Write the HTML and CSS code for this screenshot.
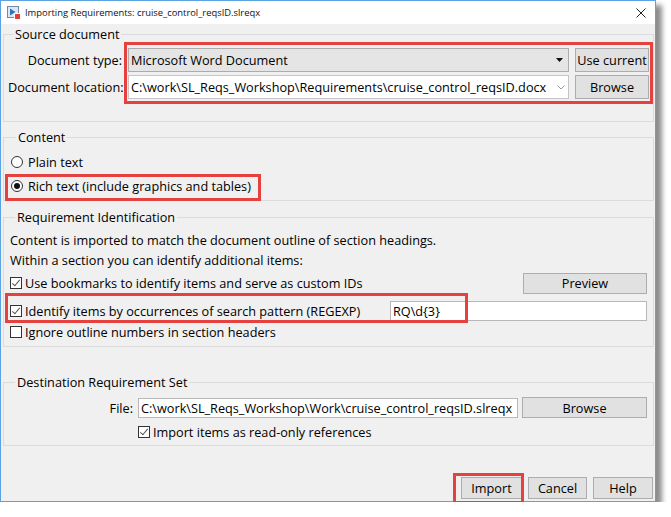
FILE: index.html
```html
<!DOCTYPE html>
<html>
<head>
<meta charset="utf-8">
<link rel="stylesheet" href="styles.css">
</head>
<body>
<div class="window">
  <div class="titlebar">
    <svg class="app-icon" width="14" height="14" viewBox="0 0 14 14">
      <rect x="0.5" y="0.5" width="11" height="11" fill="#dfe8f2" stroke="#6f8aa8"/>
      <path d="M3 2.5 L8.5 6 L3 9.5 Z" fill="#2f74c0"/>
      <rect x="7.5" y="7.5" width="6" height="6" fill="#e0403a" stroke="#fff" stroke-width="1"/>
    </svg>
    <span class="title">Importing Requirements: cruise_control_reqsID.slreqx</span>
    <svg class="close" width="10" height="10" viewBox="0 0 10 10">
      <path d="M0.5 0.5 L9.5 9.5 M9.5 0.5 L0.5 9.5" stroke="#222" stroke-width="1"/>
    </svg>
  </div>
  <div class="body">
    <section class="group g-source">
      <div class="group-title">Source document</div>
      <div class="doc-grid">
        <span class="lbl">Document type:</span>
        <div class="combo combo-ro">
          <span class="combo-text">Microsoft Word Document</span>
          <svg width="7" height="4" viewBox="0 0 7 4"><path d="M0 0 H7 L3.5 4 Z" fill="#111"/></svg>
        </div>
        <div class="btn">Use current</div>
        <span class="lbl">Document location:</span>
        <div class="combo combo-edit">
          <span class="combo-text">C:\work\SL_Reqs_Workshop\Requirements\cruise_control_reqsID.docx</span>
          <svg width="8" height="5" viewBox="0 0 8 5"><path d="M0.5 0.5 L4 4 L7.5 0.5" fill="none" stroke="#9a9a9a" stroke-width="1"/></svg>
        </div>
        <div class="btn">Browse</div>
      </div>
    </section>

    <section class="group g-content">
      <div class="group-title">Content</div>
      <div class="opt-row r-plain"><span class="radio"></span><span>Plain text</span></div>
      <div class="opt-row r-rich"><span class="radio on"></span><span>Rich text (include graphics and tables)</span></div>
    </section>

    <section class="group g-reqid">
      <div class="group-title">Requirement Identification</div>
      <div class="text-line t1">Content is imported to match the document outline of section headings.</div>
      <div class="text-line">Within a section you can identify additional items:</div>
      <div class="split-row r-book">
        <div class="opt"><span class="check on"></span><span>Use bookmarks to identify items and serve as custom IDs</span></div>
        <div class="btn btn-preview">Preview</div>
      </div>
      <div class="split-row r-pattern">
        <div class="opt"><span class="check on"></span><span>Identify items by occurrences of search pattern (REGEXP)</span></div>
        <div class="field field-pattern">RQ\d{3}</div>
      </div>
      <div class="opt-row r-ignore"><span class="check"></span><span>Ignore outline numbers in section headers</span></div>
    </section>

    <section class="group g-dest">
      <div class="group-title">Destination Requirement Set</div>
      <div class="file-row">
        <span class="lbl lbl-file">File:</span>
        <div class="field field-file">C:\work\SL_Reqs_Workshop\Work\cruise_control_reqsID.slreqx</div>
        <div class="btn btn-browse2">Browse</div>
      </div>
      <div class="opt-row r-readonly"><span class="check on"></span><span>Import items as read-only references</span></div>
    </section>

    <div class="actions">
      <div class="btn btn-act btn-import">Import</div>
      <div class="btn btn-act btn-cancel">Cancel</div>
      <div class="btn btn-act btn-help">Help</div>
    </div>
  </div>

  <div class="mark mark-source"></div>
  <div class="mark mark-rich"></div>
  <div class="mark mark-pattern"></div>
  <div class="mark mark-import"></div>
</div>
</body>
</html>
```

FILE: styles.css
```css
* { box-sizing: border-box; }
html, body { margin: 0; padding: 0; background: #ffffff; }
body {
  font-family: "Open Sans", "Noto Sans", sans-serif;
  font-size: 12.7px;
  color: #000;
}
.window {
  position: relative;
  width: 656px;
  height: 502px;
  border: 1px solid #5aa2e0;
  background: #f0f0f0;
  box-shadow: 5px 6px 5px 1px rgba(0,0,0,0.45);
  display: flex;
  flex-direction: column;
}
.titlebar {
  height: 23px;
  background: #ffffff;
  display: flex;
  align-items: center;
  padding: 0 0 0 6px;
  flex: none;
}
.app-icon { flex: none; margin-top: 1px; }
.title {
  margin-left: 4px;
  font-family: "Open Sans", sans-serif;
  font-size: 9.4px;
  color: #111;
  flex: 1;
  white-space: nowrap;
}
.close { margin-right: 9px; margin-top: 1px; }
.body {
  flex: 1;
  display: flex;
  flex-direction: column;
  padding: 0 1px 2px 2px;
}
.group {
  border: 1px solid #dcdcdc;
  flex: none;
}
.group-title {
  margin-top: -9px;
  margin-left: 5px;
  padding: 0 2px;
  width: fit-content;
  background: #f0f0f0;
  line-height: 16px;
  white-space: nowrap;
}
.g-source { margin-top: 10px; padding: 0 4px 22px 4px; }
.doc-grid {
  margin-top: 6px;
  display: grid;
  grid-template-columns: 114px minmax(0, 1fr) 74px;
  grid-template-rows: 24px 24px;
  column-gap: 6px;
  row-gap: 3px;
  align-items: center;
}
.lbl { text-align: right; white-space: nowrap; }
.combo {
  height: 24px;
  border: 1px solid #acacac;
  display: flex;
  align-items: center;
  padding: 0 5px 0 2px;
  overflow: hidden;
  white-space: nowrap;
  min-width: 0;
}
.combo-text { flex: 1; overflow: hidden; min-width: 0; }
.combo svg { flex: none; }
.combo-ro { background: #e5e5e5; }
.combo-edit { background: #ffffff; border-color: #c5c5c5; padding-right: 3px; }
.btn {
  height: 24px;
  background: #e1e1e1;
  border: 1px solid #adadad;
  display: flex;
  align-items: center;
  justify-content: center;
  white-space: nowrap;
}
.g-content { margin-top: 15px; padding: 0 0 4px 7px; }
.opt-row {
  height: 20px;
  display: flex;
  align-items: center;
  white-space: nowrap;
}
.r-plain { margin-top: 7px; }
.r-rich { margin-top: 4px; }
.radio {
  width: 12px;
  height: 12px;
  border-radius: 50%;
  border: 1px solid #333;
  background: #fff;
  margin-right: 5px;
  position: relative;
  flex: none;
}
.radio.on::after {
  content: "";
  position: absolute;
  left: 2px; top: 2px;
  width: 6px; height: 6px;
  border-radius: 50%;
  background: #111;
}
.check {
  width: 12px;
  height: 12px;
  border: 1px solid #333;
  background: #fff;
  margin-right: 3px;
  position: relative;
  flex: none;
}
.check.on::after {
  content: "";
  position: absolute;
  left: 3px; top: 0px;
  width: 3px; height: 7px;
  border-right: 1px solid #555;
  border-bottom: 1px solid #555;
  transform: rotate(40deg);
}
.g-reqid { margin-top: 16px; padding: 0 6px 4px 6px; }
.text-line { height: 20px; line-height: 20px; white-space: nowrap; }
.t1 { margin-top: 5px; }
.split-row {
  display: flex;
  align-items: center;
  justify-content: space-between;
  height: 22px;
}
.r-book { margin-top: 2px; }
.r-pattern { margin-top: 6px; }
.opt { display: flex; align-items: center; white-space: nowrap; }
.btn-preview { width: 124px; height: 21px; }
.field {
  background: #fff;
  border: 1px solid #b8b8b8;
  height: 20px;
  display: flex;
  align-items: center;
  padding: 0 2px;
  white-space: nowrap;
  overflow: hidden;
}
.field-pattern { width: 257px; }
.r-ignore { margin-top: 0; }
.g-dest { margin-top: 35px; padding: 0 6px 3px 6px; }
.file-row {
  margin-top: 7px;
  height: 21px;
  display: flex;
  align-items: center;
}
.lbl-file { width: 128px; padding-right: 5px; flex: none; }
.field-file { width: 380px; flex: none; }
.btn-browse2 { width: 125px; height: 21px; margin-left: 4px; flex: none; }
.r-readonly { margin-top: 4px; padding-left: 128px; }
.actions {
  margin-top: auto;
  display: flex;
  justify-content: flex-end;
  gap: 6px;
  padding-right: 1px;
}
.btn-act { height: 22px; }
.btn-import { width: 61px; }
.btn-cancel { width: 59px; }
.btn-help { width: 60px; }
.mark {
  position: absolute;
  border: 3px solid #e4413f;
}
.mark-source { left: 123px; top: 41px; width: 529px; height: 62px; }
.mark-rich { left: 4px; top: 173px; width: 256px; height: 27px; }
.mark-pattern { left: 4px; top: 292px; width: 463px; height: 30px; }
.mark-import { left: 452px; top: 472px; width: 71px; height: 31px; }
```
